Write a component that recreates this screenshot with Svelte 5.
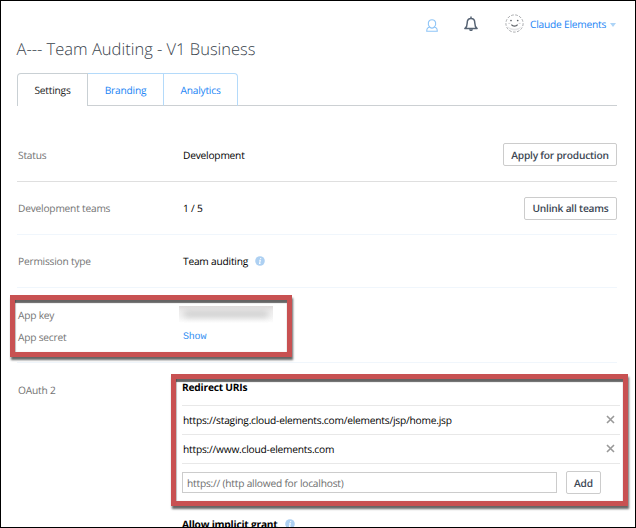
<script>
  const uris = ['https://staging.cloud-elements.com/elements/jsp/home.jsp', 'https://www.cloud-elements.com'];
</script>

{#snippet info()}
  <svg class="info" width="10" height="10" viewBox="0 0 10 10">
    <circle cx="5" cy="5" r="4.8" fill="#add0f2" />
    <path d="M5.8 2.1L5.6 3M4.3 4.2h1L4.6 7.5h.9" stroke="#fff" stroke-width="1.1" fill="none" />
  </svg>
{/snippet}

<div class="page">
  <header>
    <svg class="person" width="12" height="13" viewBox="0 0 12 13" fill="none" stroke="#8fc5f7" stroke-width="1.1">
      <path d="M3.700 8C1.200 5.500 2 .8 6 .8S10.800 5.500 8.300 8l1.700.8c1 .5 1.300 1.200 1.300 3.400H.7C.7 10 1 9.300 2 8.800L3.700 8c1.300 1.200 3.300 1.200 4.600 0" />
    </svg>
    <svg class="bell" width="14" height="16" viewBox="0 0 14 16" fill="none" stroke="#566373" stroke-width="1.5">
      <path d="M7 .4v1.8M.9 12.6h12.2c-1.6-1.4-2.3-2.7-2.3-5.7C10.8 4 9.5 2.4 7 2.4S3.2 4 3.2 6.9c0 3-.7 4.3-2.3 5.7Z" stroke-linejoin="round" />
      <path d="M5 13.200c.2 2.500 3.800 2.500 4 0Z" fill="#566373" stroke="none" />
    </svg>
    <svg class="face" width="19" height="19" viewBox="0 0 19 19" fill="none">
      <circle cx="9.5" cy="9.5" r="8.600" stroke="#9b9da0" stroke-width=".9" stroke-dasharray="2.6 1.5" />
      <path d="M2.4 12c2 6 12.2 6 14.2 0-3 3.6-11.200 3.600-14.200 0Z" fill="#e5e6e8" />
      <path d="M6.400 10.600c1.400 1.900 4.800 1.900 6.200 0" stroke="#5b6066" stroke-width="1.2" />
      <circle cx="6" cy="6.500" r=".85" fill="#5b6066" />
      <circle cx="12.700" cy="6.500" r=".85" fill="#5b6066" />
      <path d="M3.300 9.400h2M13.600 9.400h2" stroke="#d4d5d8" />
    </svg>
    <span class="user">Claude Elements</span>
    <i class="caret"></i>
  </header>
  <h1>A--- Team Auditing - V1 Business</h1>
  <nav>
    <span class="tab active"><b>Settings</b></span><span class="tab"><b>Branding</b></span><span class="tab last"><b>Analytics</b></span><span class="rest"></span>
  </nav>

  <main>
    <section class="row first">
      <span class="label">Status</span><span class="value">Development</span>
      <button class="apply">Apply for production</button>
    </section>
    <section class="row pale">
      <span class="label">Development teams</span><span class="value">1 / 5</span>
      <button class="unlink">Unlink all teams</button>
    </section>
    <section class="row pale">
      <span class="label">Permission type</span><span class="value">Team auditing</span>{@render info()}
    </section>
    <section class="keys">
      <div class="line"><span class="label">App key</span><span class="secret"><i></i></span></div>
      <div class="line"><span class="label">App secret</span><span class="show">Show</span></div>
    </section>
    <section class="oauth">
      <span class="label">OAuth 2</span>
      <div class="content">
        <h2>Redirect URIs</h2>
        {#each uris as uri}
          <div class="uri">
            <span>{uri}</span>
            <svg width="9" height="9" viewBox="0 0 9 9"><path d="M1 1l7 7M8 1l-7 7" stroke="#999" stroke-width="1.6" /></svg>
          </div>
        {/each}
        <div class="add">
          <input placeholder="https:// (http allowed for localhost)" />
          <button>Add</button>
        </div>
        <h3><span>Allow implicit grant</span>{@render info()}</h3>
      </div>
    </section>
  </main>
  <div class="mark small"></div>
  <div class="mark large"></div>
</div>

<style>
  :global(body) { margin: 0; background: #fff; }
  .page {
    position: relative; box-sizing: border-box; width: 636px; height: 528px; overflow: hidden;
    border: 1px solid #000; background: #fff; color: #000;
    font: 10.2px/16px "Open Sans", sans-serif; letter-spacing: -0.21px; text-rendering: geometricPrecision;
  }
  header { height: 34px; display: flex; align-items: flex-start; padding-left: 425px; }
  svg { display: block; flex: none; }
  .person { margin-top: 18px; }
  .bell { margin: 15px 0 0 26px; }
  .face { margin: 13px 0 0 27px; }
  .user { margin: 15px 0 0 6px; color: #1a84f5; white-space: nowrap; }
  .caret { margin: 22px 0 0 4px; border: 3px solid transparent; border-top: 4px solid #add4f7; border-bottom: 0; }
  h1 { margin: 0 0 0 15.5px; height: 38px; font-size: 16.5px; line-height: 27px; font-weight: 300; letter-spacing: 0; color: #38424b; white-space: nowrap; }
  nav { display: flex; height: 33px; margin: 0 18px 0 16px; }
  .tab {
    box-sizing: border-box; width: 76px; display: flex; align-items: center; justify-content: center;
    border: 1px solid #b4dafa; border-left: 0; border-bottom-color: #ccd0d3; color: #1a84f5;
  }
  .tab b { font-weight: 400; }
  .active { width: 71px; border: 1px solid #c9d0d4; border-bottom: 0; border-radius: 4px 0 0; color: #222; }
  .last { width: 74px; border-radius: 0 4px 0 0; }
  .rest { flex: 1; border-bottom: 1px solid #ccd0d3; }
  main { margin: 0 18px 0 16px; padding-top: 22px; }
  .row { box-sizing: border-box; height: 53px; display: flex; align-items: center; border-bottom: 1px solid #dfdfdf; padding-left: 1px; }
  .first { height: 54px; }
  .pale { border-color: #f0f6fc; }
  .label { width: 165px; flex: none; color: #737373; }
  .value { white-space: nowrap; }
  button {
    box-sizing: border-box; height: 23px; padding: 0; border: 1px solid #ccc; border-radius: 2px; background: #fff;
    color: #3b4653; font: 600 10.2px/16px "Open Sans", sans-serif; letter-spacing: -0.21px; white-space: nowrap;
    text-rendering: inherit;
  }
  .row button { margin-left: auto; }
  .apply { width: 114px; }
  .unlink { width: 93px; }
  .info { margin-left: 7px; }
  .keys { box-sizing: border-box; height: 75px; padding: 16px 0 0 1px; border-bottom: 1px solid #f0f6fc; }
  .line { display: flex; align-items: center; height: 22px; }
  .secret {
    display: flex; align-items: center; width: 94px; height: 17px; margin: -2px 0 0 -4px; overflow: hidden;
    background: linear-gradient(#e0dcdc, #eeeded 30%, #f4f4f4 65%, #fff);
  }
  .secret i { width: 84px; height: 6px; margin: 0 auto; background: #cacaca; filter: blur(3px); }
  .show { margin-top: 1px; font: 10px/16px "Liberation Mono", monospace; letter-spacing: -0.2px; color: #358ff2; }
  .oauth { display: flex; padding-left: 1px; }
  .oauth > .label { width: 164px; margin-top: 19px; }
  .content { width: 438px; flex: none; margin-top: 16px; }
  h2, h3 { margin: 0; font-size: 10.2px; line-height: 16px; font-weight: 700; }
  h2 { height: 26px; }
  .uri { box-sizing: border-box; height: 29px; display: flex; align-items: center; justify-content: space-between; border-top: 1px solid #e8e8e8; padding: 0 5px 0 1px; }
  .uri svg { margin-top: -1px; }
  .add { box-sizing: border-box; height: 53px; display: flex; gap: 9px; align-items: flex-start; border-top: 1px solid #e8e8e8; padding-top: 7px; }
  input {
    box-sizing: border-box; width: 375px; height: 21px; margin: 1px 0 0; padding: 0 4px; border: 1px solid #ccc;
    font: 10.2px "Open Sans", sans-serif; letter-spacing: -0.21px; text-rendering: inherit;
  }
  input::placeholder { color: #6d6d6d; opacity: 1; }
  .add button { width: 35px; }
  h3 { display: flex; align-items: center; }
  .mark { position: absolute; box-sizing: border-box; border: 5px solid #c85152; box-shadow: 1px 3px 2px #0009, inset 0 3px 1px #0009, inset 1px 0 1px #0003; }
  .small { left: 9px; top: 294px; width: 282px; height: 62px; }
  .large { left: 170px; top: 373px; width: 457px; height: 132px; }
</style>
